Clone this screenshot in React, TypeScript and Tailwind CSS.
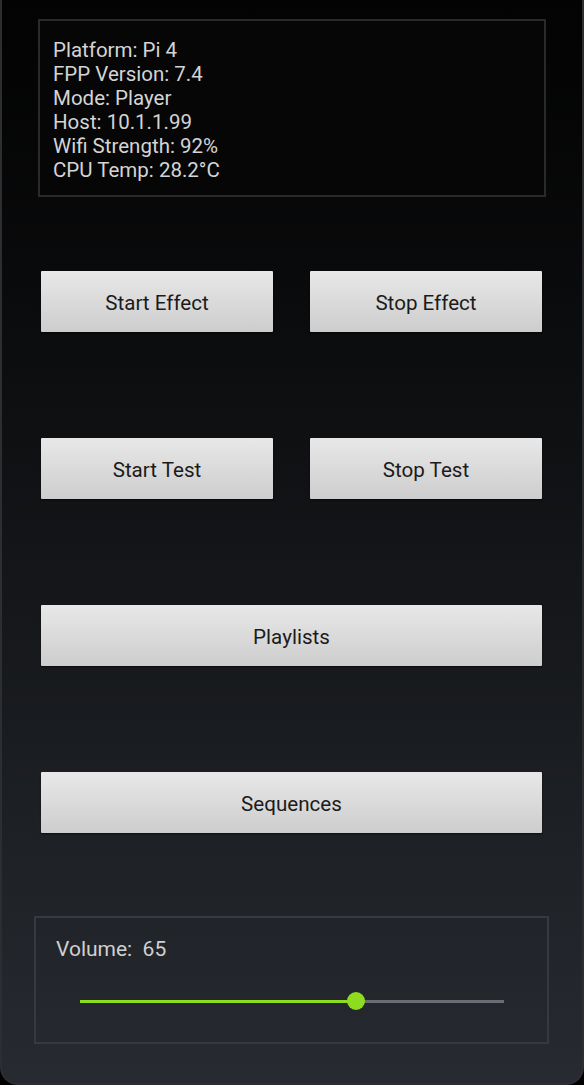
import React from "react";

const INFO = [
  "Platform: Pi 4",
  "FPP Version: 7.4",
  "Mode: Player",
  "Host: 10.1.1.99",
  "Wifi Strength: 92%",
  "CPU Temp: 28.2°C",
];

function PanelButton({ label, className = "" }: { label: string; className?: string }) {
  return (
    <button
      className={
        "h-[61px] pt-[3px] rounded-[1px] bg-gradient-to-b from-[#e8e8e8] to-[#cdcdcd] text-[20.6px] text-[#1b1b1b] shadow-[0_1px_2px_rgba(0,0,0,0.6)] " +
        className
      }
    >
      {label}
    </button>
  );
}

export default function App() {
  const volume = 65;
  return (
    <div className="w-[584px] h-[1085px] bg-black font-['Roboto',sans-serif] overflow-hidden">
      <div className="h-full border-x-2 border-b-2 border-[#2c2e31] rounded-b-[18px] bg-gradient-to-b from-[#030303] to-[#272b31] flex flex-col">
        <div className="mt-[19px] ml-[36px] mr-[36px] h-[178px] border-2 border-[#2a2a2c] bg-[#060607] pt-[17px] pl-[13px]">
          {INFO.map((line) => (
            <div key={line} className="text-[20.5px] leading-[24px] text-[#d4d4d4]">
              {line}
            </div>
          ))}
        </div>

        <div className="mt-[74px] ml-[39px] mr-[40px] flex flex-col gap-[106px]">
          <div className="flex gap-[37px]">
            <PanelButton label="Start Effect" className="w-[233px]" />
            <PanelButton label="Stop Effect" className="w-[233px]" />
          </div>
          <div className="flex gap-[37px]">
            <PanelButton label="Start Test" className="w-[233px]" />
            <PanelButton label="Stop Test" className="w-[233px]" />
          </div>
          <PanelButton label="Playlists" className="w-full" />
          <PanelButton label="Sequences" className="w-full" />
        </div>

        <div className="mt-[83px] ml-[32px] mr-[33px] h-[128px] border-2 border-[#363a40] flex flex-col">
          <div className="mt-[19px] ml-[20px] text-[21px] leading-[24px] text-[#cfd0d2] whitespace-pre">
            {"Volume:  " + volume}
          </div>
          <div className="relative mt-[30px] ml-[44px] mr-[43px] h-[20px]">
            <div className="absolute left-0 right-0 top-[9px] h-[3px] bg-[#6a6d73]" />
            <div
              className="absolute left-0 top-[9px] h-[3px] bg-[#8ddc1f]"
              style={{ width: `${volume}%` }}
            />
            <div
              className="absolute top-[1px] w-[18px] h-[18px] -ml-[9px] rounded-full bg-[#8ddc1f]"
              style={{ left: `${volume}%` }}
            />
          </div>
        </div>
      </div>
    </div>
  );
}
